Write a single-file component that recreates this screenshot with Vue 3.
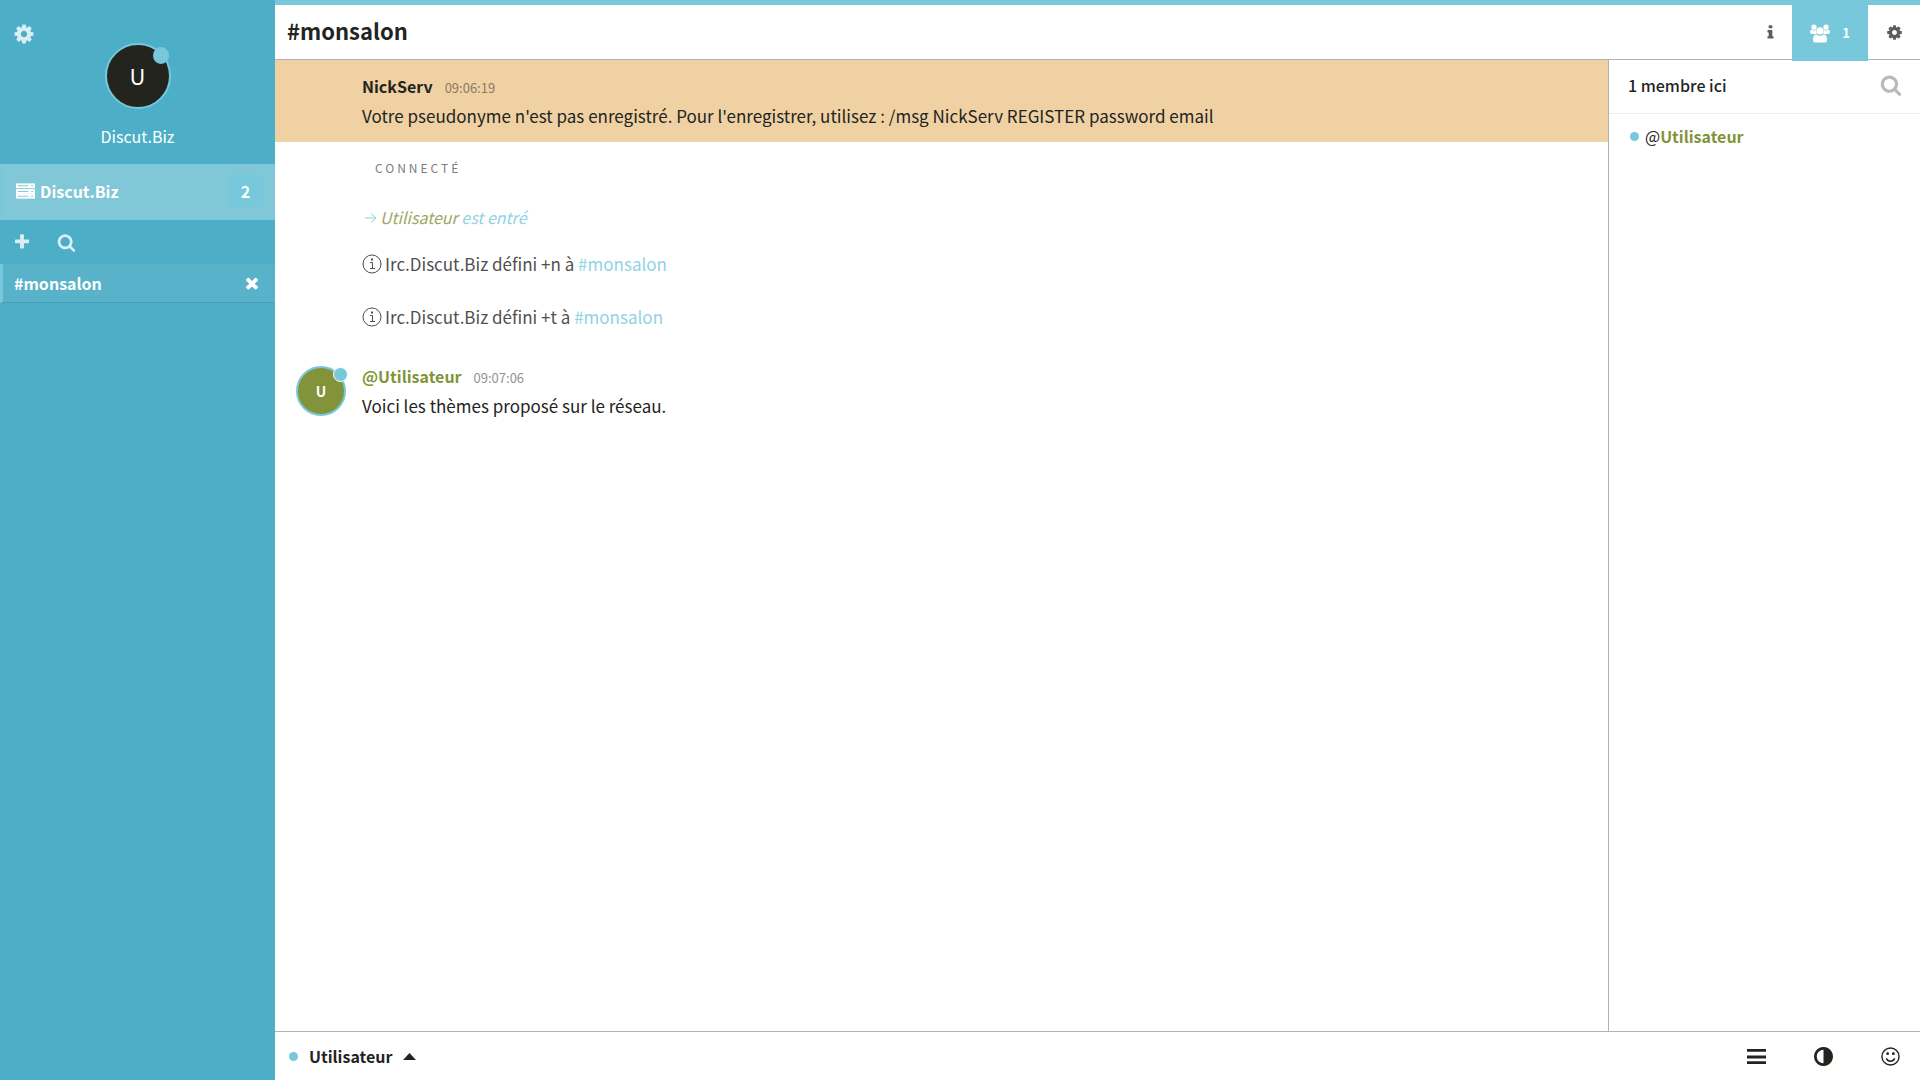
<template>
  <div class="kiwi">
    <aside class="sidebar">
      <div class="profile">
        <button class="icon-btn settings" aria-label="Paramètres">
          <svg class="icon-22" viewBox="0 0 1792 1792"><path :d="icons.cog" /></svg>
        </button>
        <div class="avatar avatar-large">U<span class="status"></span></div>
        <p class="profile-name">Discut.Biz</p>
      </div>

      <div class="network">
        <svg class="server" viewBox="0 0 20 16">
          <g v-for="y in [0, 6, 11]" :key="y">
            <rect x="0" :y="y" width="20" height="5" />
            <path :d="`M2 ${y + 2.5}h11M16 ${y + 2.5}h2`" />
          </g>
        </svg>
        <a href="#" class="network-name">Discut.Biz</a>
        <span class="badge">2</span>
      </div>

      <div class="network-tools">
        <button class="icon-btn" aria-label="Ajouter un salon">
          <svg class="icon-18" viewBox="0 0 1792 1792"><path :d="icons.plus" /></svg>
        </button>
        <button class="icon-btn" aria-label="Rechercher un salon">
          <svg class="icon-20" viewBox="0 0 1792 1792"><path :d="icons.search" /></svg>
        </button>
      </div>

      <div class="channel">
        <a href="#">#monsalon</a>
        <button class="icon-btn close" aria-label="Fermer">
          <svg class="icon-18" viewBox="0 0 1792 1792"><path :d="icons.times" /></svg>
        </button>
      </div>
    </aside>

    <main class="workspace">
      <header class="header">
        <h1>#monsalon</h1>
        <button class="icon-btn tab tab-info" aria-label="Informations">
          <svg class="icon-16" viewBox="0 0 1792 1792"><path :d="icons.info" /></svg>
        </button>
        <button class="icon-btn tab tab-active" aria-label="Membres">
          <svg class="users" viewBox="0 0 20 19">
            <circle cx="4" cy="3.2" r="2.6" />
            <circle cx="16" cy="3.2" r="2.6" />
            <path d="M0 8.2Q0 5.8 1.5 5.8Q4 7 6.2 6Q6 8.2 7 10H2Q0 10 0 8.2Z" />
            <path d="M20 8.2Q20 5.8 18.5 5.8Q16 7 13.8 6Q14 8.2 13 10H18Q20 10 20 8.2Z" />
            <circle cx="10" cy="6.8" r="3.6" />
            <path d="M3 16Q3 10.4 6.2 10.4Q10 13 13.8 10.4Q17 10.4 17 16Q17 18.5 14.5 18.5H5.5Q3 18.5 3 16Z" />
          </svg>
          <span class="count">1</span>
        </button>
        <button class="icon-btn tab" aria-label="Paramètres du salon">
          <svg class="icon-16" viewBox="0 0 1792 1792"><path :d="icons.cog" /></svg>
        </button>
      </header>

      <div class="content">
        <section class="messages">
          <article class="message notice">
            <div class="message-head">
              <strong>NickServ</strong>
              <time>09:06:19</time>
            </div>
            <p>
              Votre pseudonyme n'est pas enregistré. Pour l'enregistrer, utilisez : /msg NickServ
              REGISTER password email
            </p>
          </article>

          <p class="connected">CONNECTÉ</p>

          <p class="event join">
            <svg class="arrow" viewBox="0 0 12 12"><path d="M0 7h11M6 2.5L11 7L6 11.5" /></svg>
            <span><a href="#" class="nick">Utilisateur</a> est entré</span>
          </p>

          <p v-for="mode in modes" :key="mode" class="event mode">
            <svg class="info-round" viewBox="0 0 20 20">
              <circle cx="10" cy="10" r="9" />
              <path d="M8 8.5h2.5V14M8 14.5h5" />
              <path class="dot" d="M9 4.5h2v2H9z" />
            </svg>
            <span>Irc.Discut.Biz défini {{ mode }} à <a href="#">#monsalon</a></span>
          </p>

          <article class="message own">
            <div class="avatar avatar-small">U<span class="status"></span></div>
            <div>
              <div class="message-head">
                <strong class="nick">@Utilisateur</strong>
                <time>09:07:06</time>
              </div>
              <p>Voici les thèmes proposé sur le réseau.</p>
            </div>
          </article>
        </section>

        <aside class="members">
          <div class="members-head">
            <span>1 membre ici</span>
            <button class="icon-btn" aria-label="Rechercher un membre">
              <svg class="icon-22" viewBox="0 0 1792 1792"><path :d="icons.search" /></svg>
            </button>
          </div>
          <ul>
            <li>
              <span class="dot-online"></span>
              <span>@<a href="#" class="nick">Utilisateur</a></span>
            </li>
          </ul>
        </aside>
      </div>

      <footer class="controls">
        <button class="self">
          <span class="dot-online"></span>
          Utilisateur
          <svg class="caret" viewBox="0 0 13 7"><path d="M6.5 0L13 7H0Z" /></svg>
        </button>
        <input v-model="message" type="text" aria-label="Message" />
        <button class="icon-btn" aria-label="Menu">
          <svg class="tool" viewBox="0 0 20 20"><path d="M0 2h20v3H0zM0 9h20v3H0zM0 15h20v3H0z" /></svg>
        </button>
        <button class="icon-btn" aria-label="Contraste">
          <svg class="tool" viewBox="128 128 1536 1536"><path :d="icons.adjust" /></svg>
        </button>
        <button class="icon-btn" aria-label="Émojis">
          <svg class="tool smile" viewBox="0 0 20 20">
            <circle cx="10" cy="10" r="9" />
            <path d="M5.5 12Q7 15 10 15T14.5 12" />
            <circle class="eye" cx="7" cy="7" r="1.5" />
            <circle class="eye" cx="13" cy="7" r="1.5" />
          </svg>
        </button>
      </footer>
    </main>
  </div>
</template>

<script setup>
import { ref } from "vue";

const message = ref("");
const modes = ["+n", "+t"];

const icons = {
  cog: "M1152 896q0-106-75-181t-181-75-181 75-75 181 75 181 181 75 181-75 75-181zm512-109v222q0 12-8 23t-20 13l-185 28q-19 54-39 91 35 50 107 138 10 12 10 25t-9 23q-27 37-99 108t-94 71q-12 0-26-9l-138-108q-44 23-91 38-16 136-29 186-7 28-36 28h-222q-14 0-24.5-8.5t-11.5-21.5l-28-184q-49-16-90-37l-141 107q-10 9-25 9-14 0-25-11-126-114-165-168-7-10-7-23 0-12 8-23 15-21 51-66.5t54-70.5q-27-50-41-99l-183-27q-13-2-21-12.5t-8-23.5v-222q0-12 8-23t19-13l186-28q14-46 39-92-40-57-107-138-10-12-10-24 0-10 9-23 26-36 98.5-107.5t94.5-71.5q13 0 26 10l138 107q44-23 91-38 16-136 29-186 7-28 36-28h222q14 0 24.5 8.5t11.5 21.5l28 184q49 16 90 37l142-107q9-9 24-9 13 0 25 10 129 119 165 170 7 8 7 22 0 12-8 23-15 21-51 66.5t-54 70.5q26 50 41 98l183 28q13 2 21 12.5t8 23.5z",
  search:
    "M1216 832q0-185-131.5-316.5t-316.5-131.5-316.5 131.5-131.5 316.5 131.5 316.5 316.5 131.5 316.5-131.5 131.5-316.5zm512 832q0 52-38 90t-90 38q-54 0-90-38l-343-342q-179 124-399 124-143 0-273.5-55.5t-225-150-150-225-55.5-273.5 55.5-273.5 150-225 225-150 273.5-55.5 273.5 55.5 225 150 150 225 55.5 273.5q0 220-124 399l343 343q37 37 37 90z",
  plus: "M1600 736v192q0 40-28 68t-68 28h-416v416q0 40-28 68t-68 28h-192q-40 0-68-28t-28-68v-416h-416q-40 0-68-28t-28-68v-192q0-40 28-68t68-28h416v-416q0-40 28-68t68-28h192q40 0 68 28t28 68v416h416q40 0 68 28t28 68z",
  times:
    "M1490 1322q0 40-28 68l-136 136q-28 28-68 28t-68-28l-294-294-294 294q-28 28-68 28t-68-28l-136-136q-28-28-28-68t28-68l294-294-294-294q-28-28-28-68t28-68l136-136q28-28 68-28t68 28l294 294 294-294q28-28 68-28t68 28l136 136q28 28 28 68t-28 68l-294 294 294 294q28 28 28 68z",
  info: "M1216 1344v128q0 26-19 45t-45 19h-512q-26 0-45-19t-19-45v-128q0-26 19-45t45-19h64v-384h-64q-26 0-45-19t-19-45v-128q0-26 19-45t45-19h384q26 0 45 19t19 45v576h64q26 0 45 19t19 45zm-128-1152v192q0 26-19 45t-45 19h-256q-26 0-45-19t-19-45v-192q0-26 19-45t45-19h256q26 0 45 19t19 45z",
  adjust:
    "M896 1440v-1088q-148 0-273 73t-198 198-73 273 73 273 198 198 273 73zm768-544q0 209-103 385.5t-279.5 279.5-385.5 103-385.5-103-279.5-279.5-103-385.5 103-385.5 279.5-279.5 385.5-103 385.5 103 279.5 279.5 103 385.5z",
};
</script>

<style>
body {
  margin: 0;
}
</style>

<style scoped>
* {
  box-sizing: border-box;
}

.kiwi {
  display: flex;
  min-height: 100vh;
  font-family: "Noto Sans CJK SC", "Source Sans Pro", sans-serif;
  font-size: 16px;
  line-height: 24px;
  color: #24241f;
  background: #fff;
}

p,
h1,
ul {
  margin: 0;
  padding: 0;
}

a {
  color: inherit;
  text-decoration: none;
}

svg {
  display: block;
  flex-shrink: 0;
  fill: currentColor;
}

button {
  font: inherit;
  color: inherit;
  background: none;
  border: none;
  padding: 0;
  cursor: pointer;
}

.icon-btn {
  display: flex;
  align-items: center;
  justify-content: center;
}

.icon-16 {
  width: 17px;
  height: 17px;
}

.icon-18 {
  width: 18px;
  height: 18px;
}

.icon-20 {
  width: 19px;
  height: 19px;
}

.icon-22 {
  width: 22px;
  height: 22px;
}

/* Sidebar */
.sidebar {
  width: 275px;
  flex-shrink: 0;
  background: #4caec7;
  color: #fff;
}

.profile {
  position: relative;
  display: flex;
  flex-direction: column;
  align-items: center;
  height: 164px;
  padding-top: 43px;
}

.settings {
  position: absolute;
  left: 13px;
  top: 23px;
  opacity: 0.8;
}

.profile-name {
  margin-top: 15px;
}

.avatar {
  position: relative;
  display: flex;
  align-items: center;
  justify-content: center;
  flex-shrink: 0;
  border: 2px solid #77c8db;
  border-radius: 50%;
  color: #fff;
}

.avatar-large {
  width: 66px;
  height: 66px;
  padding-bottom: 2px;
  background: #24241f;
  font-size: 22px;
}

.avatar-small {
  width: 50px;
  height: 50px;
  background: #82933a;
  font-size: 14px;
  font-weight: 700;
}

.status {
  position: absolute;
  top: 2px;
  right: 0;
  width: 16px;
  height: 17px;
  border-radius: 50%;
  background: #77c8db;
}

.avatar-small .status {
  top: -1px;
  right: -4px;
  width: 15px;
  height: 15px;
  border: 1px solid #fff;
}

.network {
  display: flex;
  align-items: center;
  height: 56px;
  padding: 0 12px 2px 13px;
  border-left: 3px solid #77c8db;
  background: #80c7d7;
  font-weight: 700;
}

.server {
  width: 19px;
  height: 16px;
}

.server path {
  fill: none;
  stroke: #80c7d7;
}

.network-name {
  flex: 1;
  margin-left: 5px;
}

.badge {
  width: 35px;
  border-radius: 4px;
  background: #77c8db;
  line-height: 32px;
  text-align: center;
}

.network-tools {
  display: flex;
  align-items: center;
  gap: 26px;
  height: 44px;
  padding-left: 13px;
}

.network-tools .icon-btn {
  opacity: 0.8;
}

.channel {
  display: flex;
  align-items: center;
  justify-content: space-between;
  height: 39px;
  padding: 0 14px 1px 11px;
  border-left: 3px solid #77c8db;
  border-bottom: 1px solid #469fb6;
  background: #58b2ca;
  font-weight: 700;
}

/* Header */
.workspace {
  display: flex;
  flex: 1;
  flex-direction: column;
  min-width: 0;
}

.header {
  display: flex;
  height: 60px;
  border-top: 5px solid #77c8db;
  border-bottom: 1px solid #b2b2b2;
}

.header h1 {
  flex: 1;
  padding-left: 12px;
  font-size: 22px;
  line-height: 51px;
  font-weight: 700;
}

.tab {
  width: 52px;
  color: #5c5c58;
}

.tab-info {
  width: 44px;
}

.tab-active {
  gap: 12px;
  width: 76px;
  height: 56px;
  background: #77c8db;
  color: #fff;
}

.users {
  width: 20px;
  height: 19px;
}

.count {
  font-size: 13px;
  font-weight: 700;
}

/* Messages */
.content {
  display: flex;
  flex: 1;
}

.messages {
  flex: 1;
  min-width: 0;
}

.message-head {
  display: flex;
  align-items: baseline;
  gap: 12px;
}

time {
  font-size: 13px;
  opacity: 0.5;
}

.message p {
  margin-top: 4px;
  font-size: 17px;
}

.notice {
  height: 82px;
  padding: 14px 20px 0 87px;
  background: #efd1a4;
}

.connected {
  padding: 14px 0 0 100px;
  font-size: 12px;
  letter-spacing: 3px;
  opacity: 0.6;
}

.event {
  display: flex;
  align-items: center;
  padding-left: 87px;
  font-size: 17px;
  opacity: 0.8;
}

.event a,
.join {
  color: #77c8db;
}

.join {
  gap: 3px;
  margin-top: 25px;
  padding-left: 90px;
  font-size: 16px;
  font-style: italic;
}

.arrow {
  width: 12px;
  height: 12px;
}

.arrow path {
  fill: none;
  stroke: currentColor;
}

.mode {
  gap: 3px;
  margin-top: 23px;
}

.mode + .mode {
  margin-top: 29px;
}

.info-round {
  width: 20px;
  height: 20px;
  fill: none;
  stroke: currentColor;
}

.info-round .dot {
  fill: currentColor;
  stroke: none;
}

.event .nick,
.nick {
  color: #82933a;
  font-weight: 700;
}

.event .nick {
  font-weight: 400;
}

.own {
  display: flex;
  align-items: center;
  gap: 16px;
  margin-top: 35px;
  padding-left: 21px;
}

/* Members */
.members {
  width: 312px;
  border-left: 1px solid #b2b2b2;
}

.members-head {
  display: flex;
  align-items: center;
  justify-content: space-between;
  height: 54px;
  padding: 0 18px 4px 19px;
  border-bottom: 1px solid #eee;
  font-weight: 500;
}

.members-head .icon-btn {
  color: #bababa;
}

.members li {
  display: flex;
  align-items: center;
  gap: 6px;
  padding: 10px 0 0 21px;
  list-style: none;
}

.dot-online {
  width: 9px;
  height: 9px;
  border-radius: 50%;
  background: #77c8db;
}

/* Footer */
.controls {
  display: flex;
  align-items: center;
  gap: 48px;
  height: 49px;
  padding: 0 20px 0 14px;
  border-top: 1px solid #b2b2b2;
}

.self {
  display: flex;
  align-items: center;
  font-weight: 700;
}

.self .dot-online {
  margin-right: 11px;
}

.caret {
  width: 13px;
  height: 7px;
  margin-left: 11px;
}

.controls input {
  flex: 1;
  min-width: 0;
  border: none;
  outline: none;
  background: none;
  font: inherit;
}

.tool {
  width: 19px;
  height: 19px;
}

.smile {
  fill: none;
  stroke: currentColor;
  stroke-width: 1.5;
}

.smile .eye {
  fill: currentColor;
  stroke: none;
}
</style>
